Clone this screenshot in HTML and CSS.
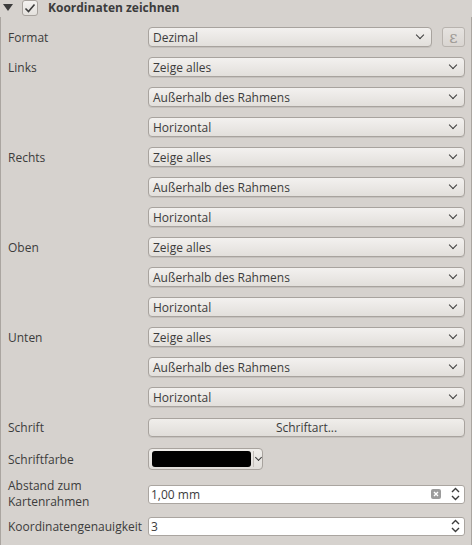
FILE: index.html
```html
<!DOCTYPE html>
<html>
<head>
<meta charset="utf-8">
<link rel="stylesheet" href="styles.css">
</head>
<body>
<div class="header">
  <span class="tri"></span>
  <span class="check"><svg width="12" height="10" viewBox="0 0 12 10"><path d="M1.5 5.5 L4.5 8.5 L10.5 1.5" fill="none" stroke="#3c3c3c" stroke-width="1.6"/></svg></span>
  <span class="title">Koordinaten zeichnen</span>
</div>
<div class="panel">
  <div class="lbl">Format</div>
  <div class="ctl split">
    <div class="combo"><span>Dezimal</span><i class="chev"></i></div>
    <div class="epsbtn">ε</div>
  </div>

  <div class="lbl">Links</div>
  <div class="ctl"><div class="combo"><span>Zeige alles</span><i class="chev"></i></div></div>
  <div class="lbl"></div>
  <div class="ctl"><div class="combo"><span>Außerhalb des Rahmens</span><i class="chev"></i></div></div>
  <div class="lbl"></div>
  <div class="ctl"><div class="combo"><span>Horizontal</span><i class="chev"></i></div></div>

  <div class="lbl">Rechts</div>
  <div class="ctl"><div class="combo"><span>Zeige alles</span><i class="chev"></i></div></div>
  <div class="lbl"></div>
  <div class="ctl"><div class="combo"><span>Außerhalb des Rahmens</span><i class="chev"></i></div></div>
  <div class="lbl"></div>
  <div class="ctl"><div class="combo"><span>Horizontal</span><i class="chev"></i></div></div>

  <div class="lbl">Oben</div>
  <div class="ctl"><div class="combo"><span>Zeige alles</span><i class="chev"></i></div></div>
  <div class="lbl"></div>
  <div class="ctl"><div class="combo"><span>Außerhalb des Rahmens</span><i class="chev"></i></div></div>
  <div class="lbl"></div>
  <div class="ctl"><div class="combo"><span>Horizontal</span><i class="chev"></i></div></div>

  <div class="lbl">Unten</div>
  <div class="ctl"><div class="combo"><span>Zeige alles</span><i class="chev"></i></div></div>
  <div class="lbl"></div>
  <div class="ctl"><div class="combo"><span>Außerhalb des Rahmens</span><i class="chev"></i></div></div>
  <div class="lbl"></div>
  <div class="ctl"><div class="combo"><span>Horizontal</span><i class="chev"></i></div></div>

  <div class="lbl">Schrift</div>
  <div class="ctl"><div class="button">Schriftart...</div></div>

  <div class="lbl">Schriftfarbe</div>
  <div class="ctl"><div class="colorbtn"><span class="swatch"></span><span class="cdrop"><i class="chev small"></i></span></div></div>

  <div class="lbl two"><span class="line">Abstand zum</span><span class="line">Kartenrahmen</span></div>
  <div class="ctl"><div class="spin"><span class="val">1,00 mm</span><span class="clear"><svg width="10" height="10" viewBox="0 0 10 10"><rect x="0" y="0" width="10" height="10" rx="2" fill="#9b9b9b"/><path d="M3 3 L7 7 M7 3 L3 7" stroke="#fff" stroke-width="1.4"/></svg></span><span class="arrows"><svg width="9" height="14" viewBox="0 0 9 14"><path d="M1 5 L4.5 1.5 L8 5 M1 9 L4.5 12.5 L8 9" fill="none" stroke="#3c3c3c" stroke-width="1.4"/></svg></span></div></div>

  <div class="lbl">Koordinatengenauigkeit</div>
  <div class="ctl"><div class="spin"><span class="val">3</span><span class="arrows"><svg width="9" height="14" viewBox="0 0 9 14"><path d="M1 5 L4.5 1.5 L8 5 M1 9 L4.5 12.5 L8 9" fill="none" stroke="#3c3c3c" stroke-width="1.4"/></svg></span></div></div>
</div>
</body>
</html>
```
FILE: styles.css
```css
html, body {
  margin: 0;
  padding: 0;
}
body {
  width: 472px;
  height: 545px;
  background: #d6d2ce;
  font-family: "Open Sans", "DejaVu Sans", sans-serif;
  font-size: 12px;
  color: #3c3c3c;
  overflow: hidden;
}
.header {
  height: 17px;
  display: flex;
  align-items: center;
  padding-left: 3px;
}
.tri {
  width: 0;
  height: 0;
  border-left: 5px solid transparent;
  border-right: 5px solid transparent;
  border-top: 7px solid #3c3c3c;
  margin-top: -2px;
}
.check {
  margin-left: 9px;
  width: 14px;
  height: 14px;
  border: 1px solid #a8a39e;
  border-radius: 3px;
  background: linear-gradient(#f4f2f0, #e4e1dd);
  display: flex;
  align-items: center;
  justify-content: center;
  margin-top: -2px;
}
.title {
  margin-left: 10px;
  font-weight: bold;
  margin-top: -3px;
}
.panel {
  border-left: 1px solid #aaa5a0;
  border-right: 1px solid #aaa5a0;
  height: 528px;
  box-sizing: border-box;
  padding: 10px 6px 0 7px;
  display: grid;
  grid-template-columns: 140px 1fr;
  grid-template-rows: repeat(14, 20px) 24px 26px 18px;
  row-gap: 10px;
}
.lbl {
  display: flex;
  align-items: center;
  white-space: nowrap;
}
.lbl.two {
  flex-direction: column;
  align-items: flex-start;
  justify-content: center;
}
.line {
  display: block;
  flex: none;
  height: 16px;
  line-height: 16px;
}
.ctl {
  display: flex;
  align-items: center;
}
.split {
  gap: 10px;
}
.combo {
  flex: 1;
  height: 20px;
  box-sizing: border-box;
  border: 1px solid #a8a39e;
  border-radius: 4px;
  background: linear-gradient(#f3f1ef, #e2dfdb);
  box-shadow: 0 1px 0 rgba(0,0,0,0.08);
  display: flex;
  align-items: center;
  justify-content: space-between;
  padding: 0 6px 0 4px;
}
.chev {
  width: 5px;
  height: 5px;
  border-right: 1.6px solid #3c3c3c;
  border-bottom: 1.6px solid #3c3c3c;
  transform: rotate(45deg);
  margin-top: -4px;
  margin-right: 2px;
}
.chev.small {
  width: 4px;
  height: 4px;
  border-width: 1.3px;
  margin: -3px 0 0 0;
}
.epsbtn {
  width: 23px;
  height: 20px;
  box-sizing: border-box;
  border: 1px solid #b8b3ae;
  border-radius: 3px;
  background: linear-gradient(#e6e3e0, #d9d5d1);
  color: #9e9a96;
  font-family: "DejaVu Serif", serif;
  font-size: 16px;
  display: flex;
  align-items: center;
  justify-content: center;
}
.button {
  flex: 1;
  height: 19px;
  box-sizing: border-box;
  border: 1px solid #a8a39e;
  border-radius: 4px;
  background: linear-gradient(#f0eeeb, #e0ddd9);
  box-shadow: 0 1px 0 rgba(0,0,0,0.08);
  display: flex;
  align-items: center;
  justify-content: center;
}
.colorbtn {
  width: 115px;
  height: 22px;
  box-sizing: border-box;
  border: 1px solid #a8a39e;
  border-radius: 4px;
  background: linear-gradient(#f0eeeb, #e0ddd9);
  display: flex;
  align-items: stretch;
  padding: 2px 0 2px 3px;
}
.swatch {
  width: 99px;
  background: #000;
  border-radius: 3px;
}
.cdrop {
  flex: 1;
  border-left: 1px solid #c3beb9;
  margin-left: 2px;
  display: flex;
  align-items: center;
  justify-content: center;
}
.spin {
  flex: 1;
  height: 19px;
  box-sizing: border-box;
  border: 1px solid #aaa5a0;
  border-radius: 3px;
  background: #fff;
  display: flex;
  align-items: center;
  padding: 0 4px 0 2px;
}
.val {
  flex: 1;
}
.clear {
  display: flex;
  margin-right: 10px;
}
.arrows {
  display: flex;
}
```
